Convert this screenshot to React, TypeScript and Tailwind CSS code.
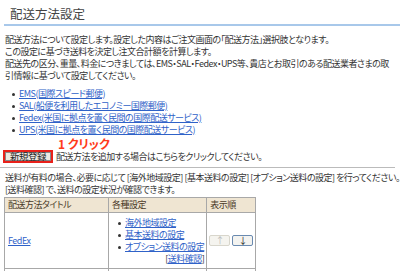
import React from "react";

const font = "[font-family:'Noto_Sans_CJK_JP','Noto_Sans',sans-serif] [font-feature-settings:'palt']";

const links = [
    "EMS(国際スピード郵便)",
    "SAL(船便を利用したエコノミー国際郵便)",
    "Fedex(米国に拠点を置く民間の国際配送サービス)",
    "UPS(米国に拠点を置く民間の国際配送サービス)",
];

const settings = ["海外地域設定", "基本送料の設定", "オプション送料の設定"];

export default function App() {
    return (
        <div className={`w-[400px] h-[271px] overflow-hidden bg-white text-[#333] text-[9px] leading-[12px] tracking-[-0.5px] ${font}`}>
            {/* タイトル */}
            <h1 className="pl-[10px] pt-[6px] text-[12.5px] leading-[16px] tracking-normal text-[#444]">配送方法設定</h1>
            <div className="ml-[4px] mt-[2px] h-[2px] bg-[#a8c8ea]" />

            {/* 説明 */}
            <div className="px-[5px] pt-[8px] whitespace-nowrap">
                <p>配送方法について設定します。設定した内容はご注文画面の「配送方法」選択肢となります。</p>
                <p>この設定に基づき送料を決定し注文合計額を計算します。</p>
                <p>配送先の区分、重量、料金につきましては、EMS・SAL・Fedex・UPS等、貴店とお取引のある配送業者さまの取</p>
                <p>引情報に基づいて設定してください。</p>
            </div>

            <ul className="mt-[6px] pl-[12px]">
                {links.map((t) => (
                    <li key={t} className="flex items-center gap-[4px]">
                        <span className="w-[3px] h-[3px] rounded-full bg-[#333]" />
                        <a className="text-[#2f62c8] underline">{t}</a>
                    </li>
                ))}
            </ul>

            {/* 新規登録 */}
            <div className="relative mt-[14px] pl-[3px] flex items-center gap-[3px]">
                <span className="absolute left-[58px] top-[-12px] text-[12px] leading-[12px] tracking-normal font-bold text-[#ff3a1a]">1 クリック</span>
                <div className="border-2 border-[#e8201a]">
                    <button className="h-[9px] w-[46px] flex items-center justify-center bg-[#ece9e2] border border-[#888] text-[9.5px] leading-[9px] text-[#222]">
                        新規登録
                    </button>
                </div>
                <span>配送方法を追加する場合はこちらをクリックしてください。</span>
            </div>

            <div className="mt-[4px] mr-[5px] h-px bg-[#bbb]" />

            <div className="px-[5px] pt-[4px] whitespace-nowrap">
                <p>送料が有料の場合、必要に応じて [海外地域設定] [基本送料の設定] [オプション送料の設定] を行ってください。</p>
                <p>[送料確認] で、送料の設定状況が確認できます。</p>
            </div>

            {/* 一覧 */}
            <table className="ml-[4px] mt-[1px] border-collapse">
                <thead>
                    <tr className="bg-[#efe5d2] text-[#4a3a28]">
                        <th className="w-[104px] h-[15px] border border-[#a8a8a8] px-[3px] text-left font-normal">配送方法タイトル</th>
                        <th className="w-[98px] border border-[#a8a8a8] px-[3px] text-left font-normal">各種設定</th>
                        <th className="w-[48px] border border-[#a8a8a8] px-[3px] text-left font-normal">表示順</th>
                    </tr>
                </thead>
                <tbody>
                    <tr>
                        <td className="border border-[#a8a8a8] px-[3px] align-middle">
                            <a className="text-[#2f62c8] underline">FedEx</a>
                        </td>
                        <td className="h-[56px] border border-[#a8a8a8] pl-[9px] pr-[2px] pt-[4px] align-top">
                            <ul>
                                {settings.map((t) => (
                                    <li key={t} className="flex items-center gap-[4px]">
                                        <span className="w-[3px] h-[3px] rounded-full bg-[#333]" />
                                        <a className="text-[#2f62c8] underline whitespace-nowrap">{t}</a>
                                    </li>
                                ))}
                            </ul>
                            <div className="text-right">
                                [<a className="text-[#2f62c8] underline">送料確認</a>]
                            </div>
                        </td>
                        <td className="border border-[#a8a8a8] px-[2px] align-middle">
                            <div className="flex gap-[2px]">
                                <button className="w-[21px] h-[11px] flex items-center justify-center rounded-[2px] border border-[#d8d6cc] bg-[#f5f4ef] text-[#bbb] text-[9px] leading-none">↑</button>
                                <button className="w-[21px] h-[11px] flex items-center justify-center rounded-[2px] border border-[#6a8ab0] bg-[#f3f3f0] text-[#222] text-[9px] leading-none">↓</button>
                            </div>
                        </td>
                    </tr>
                    <tr>
                        <td className="h-[10px] border border-[#a8a8a8]" />
                        <td className="border border-[#a8a8a8]" />
                        <td className="border border-[#a8a8a8]" />
                    </tr>
                </tbody>
            </table>
        </div>
    );
}
